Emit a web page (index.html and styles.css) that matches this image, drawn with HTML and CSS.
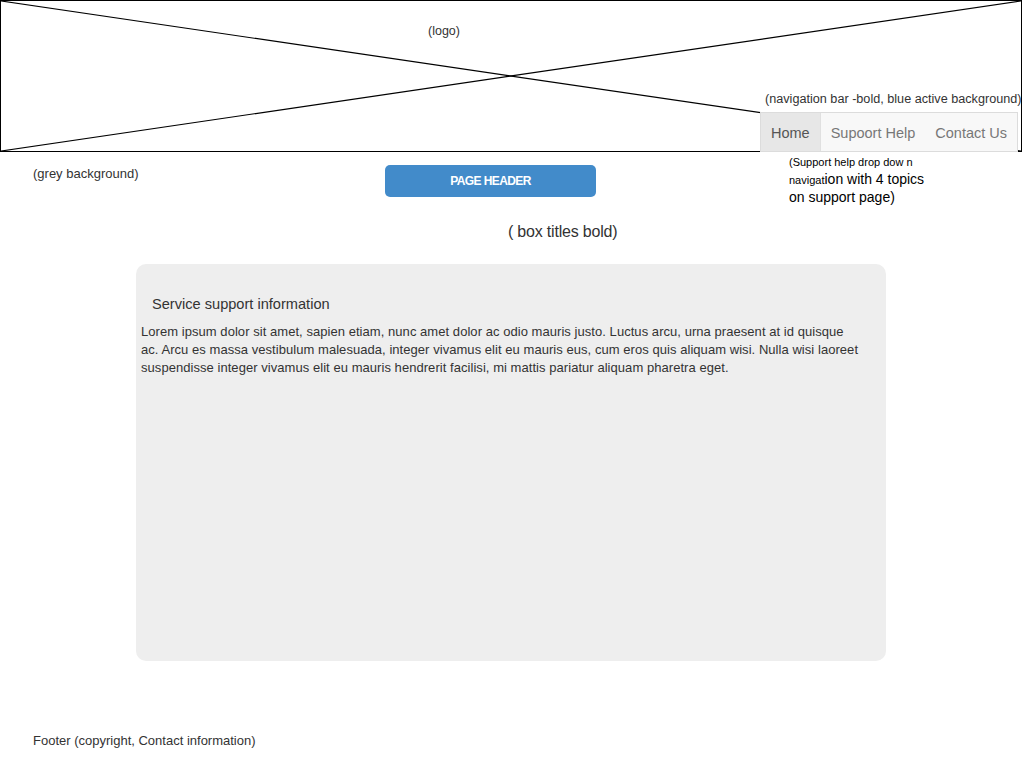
FILE: index.html
```html
<!DOCTYPE html>
<html lang="en">
<head>
<meta charset="utf-8">
<title>Support page wireframe</title>
<link rel="stylesheet" href="styles.css">
</head>
<body>
<header class="header">
  <svg class="placeholder" viewBox="0 0 1020 150" preserveAspectRatio="none" aria-hidden="true">
    <line x1="0" y1="0" x2="1020" y2="150"/>
    <line x1="0" y1="150" x2="1020" y2="0"/>
  </svg>
  <span class="logo-note">(logo)</span>
  <span class="nav-note">(navigation bar -bold, blue active background)</span>
  <nav class="nav">
    <a class="nav-item active">Home</a>
    <a class="nav-item">Supoort Help</a>
    <a class="nav-item">Contact Us</a>
  </nav>
  <div class="dropdown-note">
    <div class="small">(Support help drop dow n</div>
    <div><span class="small">navigat</span>ion with 4 topics</div>
    <div>on support page)</div>
  </div>
</header>

<div class="toprow">
  <span class="bg-note">(grey background)</span>
  <div class="page-header">PAGE HEADER</div>
</div>

<div class="titles-note">( box titles bold)</div>

<section class="box">
  <h2 class="box-title">Service support information</h2>
  <p class="box-text">Lorem ipsum dolor sit amet, sapien etiam, nunc amet dolor ac odio mauris justo. Luctus arcu, urna praesent at id quisque ac. Arcu es massa vestibulum malesuada, integer vivamus elit eu mauris eus, cum eros quis aliquam wisi. Nulla wisi laoreet suspendisse integer vivamus elit eu mauris hendrerit facilisi, mi mattis pariatur aliquam pharetra eget.</p>
</section>

<footer class="footer">Footer (copyright, Contact information)</footer>
</body>
</html>
```

FILE: styles.css
```css
* { box-sizing: border-box; }

body {
  margin: 0;
  font-family: "Liberation Sans", Arial, sans-serif;
  color: #333;
  background: #fff;
  font-size: 13px;
}

.header {
  position: relative;
  width: 1022px;
  height: 152px;
  border: 1px solid #000;
}

.placeholder {
  position: absolute;
  inset: 0;
  width: 100%;
  height: 100%;
}
.placeholder line {
  stroke: #000;
  stroke-width: 1.2;
  vector-effect: non-scaling-stroke;
}

.logo-note {
  position: absolute;
  left: 427px;
  top: 23px;
  font-size: 12.5px;
  line-height: 14px;
}

.nav-note {
  position: absolute;
  left: 764px;
  top: 91px;
  font-size: 12.65px;
  line-height: 14px;
  white-space: nowrap;
  background: #fff;
}

.nav {
  position: absolute;
  left: 759px;
  top: 111px;
  height: 40px;
  display: flex;
  border: 1px solid #dcdcdc;
  background: #f8f8f8;
  z-index: 2;
}

.nav-item {
  display: flex;
  align-items: center;
  padding: 1px 10px 0;
  font-size: 14.5px;
  color: #777;
  text-decoration: none;
}
.nav-item.active {
  background: #e7e7e7;
  color: #555;
  border-right: 1px solid #e0e0e0;
}

.dropdown-note {
  position: absolute;
  left: 788px;
  top: 153px;
  font-size: 14px;
  line-height: 17px;
  color: #000;
  white-space: nowrap;
}
.dropdown-note .small { font-size: 11px; }

.toprow {
  display: flex;
  align-items: flex-start;
  padding: 13px 0 0 33px;
}

.bg-note {
  width: 352px;
  margin-top: 1px;
  font-size: 13px;
  line-height: 16px;
}

.page-header {
  width: 211px;
  height: 32px;
  border-radius: 5px;
  background: #428bca;
  color: #fff;
  font-weight: bold;
  font-size: 12px;
  letter-spacing: -0.6px;
  display: flex;
  align-items: center;
  justify-content: center;
}

.titles-note {
  margin: 26px 0 0 508px;
  font-size: 16px;
  line-height: 18px;
  letter-spacing: -0.2px;
}

.box {
  margin: 23px 0 0 136px;
  width: 750px;
  height: 397px;
  background: #eeeeee;
  border-radius: 10px;
  padding: 31px 25px 0 5px;
}

.box-title {
  margin: 0 0 10px 11px;
  font-size: 14.6px;
  line-height: 18px;
  font-weight: normal;
}

.box-text {
  margin: 0;
  font-size: 13px;
  letter-spacing: 0.05px;
  line-height: 18px;
}

.footer {
  margin: 72px 0 0 33px;
  font-size: 13px;
  line-height: 16px;
}
```
